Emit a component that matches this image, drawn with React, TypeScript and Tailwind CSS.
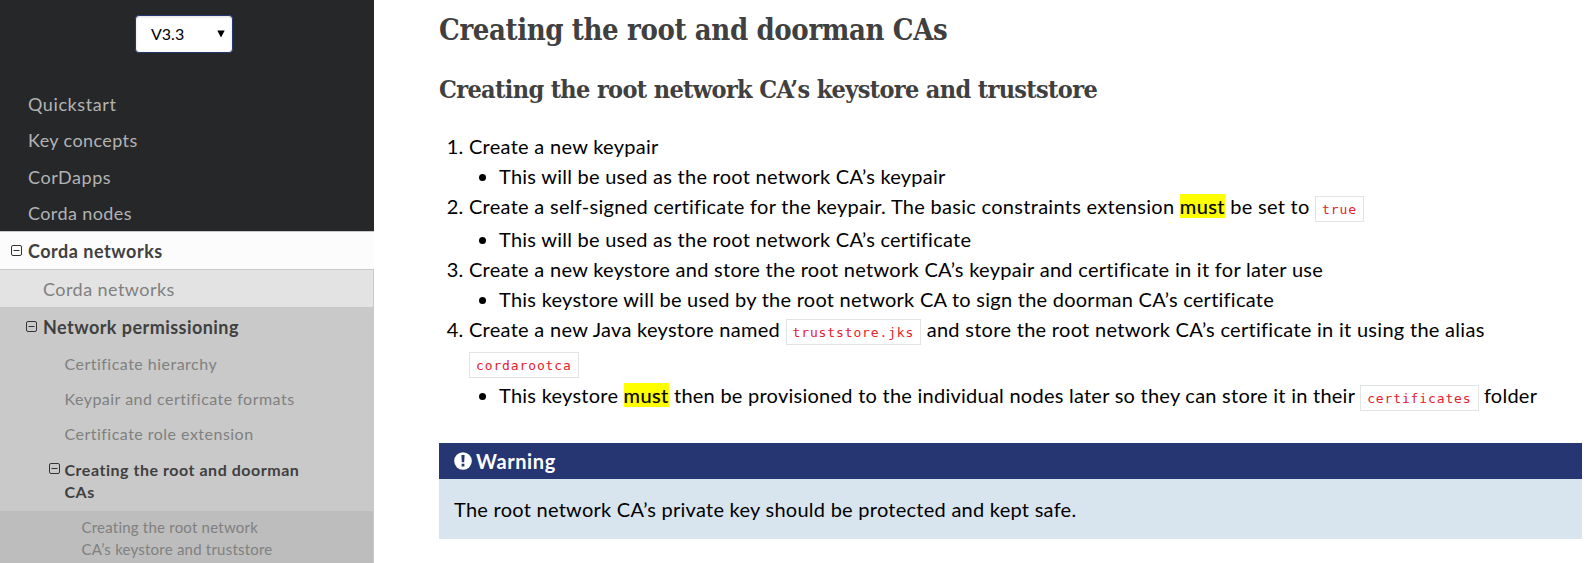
import type { ReactNode } from "react";

const Code = ({ children }: { children: ReactNode }) => (
  <code className="inline-block h-[26px] border border-[#e1e4e5] bg-white px-[6px] align-[0px] font-['DejaVu_Sans_Mono',monospace] text-[13px] leading-[25px] tracking-[0.87px] text-[#e7202c]">
    {children}
  </code>
);

const Must = () => <span className="bg-[#ffff00] tracking-[0.4px] [-webkit-text-stroke:0.2px_black]">must</span>;

const Minus = ({ className }: { className: string }) => (
  <svg className={className} width="11" height="11" viewBox="0 0 11 11" fill="none" stroke="#333">
    <rect x="0.5" y="0.5" width="10" height="10" rx="1.5" />
    <path d="M2.5 5.5h6" />
  </svg>
);

const Sub = ({ children }: { children: ReactNode }) => (
  <ul className="ml-[30px] list-disc leading-[30px] tracking-[0.25px]">
    <li>{children}</li>
  </ul>
);

export default function App() {
  return (
    <div className="flex h-[563px] w-[1593px] overflow-hidden bg-white font-['Lato',sans-serif] text-black">
      <nav className="flex w-[374px] shrink-0 flex-col bg-[#252729] text-[18px]">
        <div className="flex h-[86px] justify-center pt-[15px] pr-[6px]">
          <button className="flex h-[38px] w-[98px] items-center justify-between rounded-[4px] border border-[#263673] bg-white pl-[15px] pr-[7px] text-[16px] text-black shadow-[inset_0_1px_3px_#ddd]">
            <span>V3.3</span>
            <svg width="8" height="8" viewBox="0 0 8 8"><path d="M0.3 0.5h7.4L4 7.5z" /></svg>
          </button>
        </div>
        <div className="flex h-[145px] flex-col pl-7 leading-[36.4px] tracking-[0.4px] text-[#b3b3b3]">
          <a className="tracking-[0.6px]">Quickstart</a>
          <a>Key concepts</a>
          <a className="tracking-[0.55px]">CorDapps</a>
          <a>Corda nodes</a>
        </div>
        <div className="flex h-[39px] items-center border-y border-[#c9c9c9] bg-[#fcfcfc] pl-[11px] font-bold tracking-[0.52px] text-[#404040]">
          <Minus className="mr-[6px]" />
          <span className="pt-[2px]">Corda networks</span>
        </div>
        <div className="flex h-[37px] items-center border-r border-[#c9c9c9] bg-[#e3e3e3] pl-[43px] pt-[2px] tracking-[0.45px] text-[#808080]">
          Corda networks
        </div>
        <div className="h-[204px] bg-[#c9c9c9] text-[16px] text-[#808080]">
          <div className="flex h-[39px] items-center pl-[26px] text-[18px] font-bold tracking-[0.45px] text-[#404040]">
            <Minus className="mr-[6px]" />
            <span className="pt-[2px]">Network permissioning</span>
          </div>
          <div className="flex flex-col pl-[64.5px] leading-[35px] tracking-[0.48px]">
            <a>Certificate hierarchy</a>
            <a>Keypair and certificate formats</a>
            <a>Certificate role extension</a>
          </div>
          <div className="flex pl-[49px] pt-[8px] font-bold leading-[22px] tracking-[0.53px] text-[#404040]">
            <Minus className="mr-[4.5px] mt-[4px]" />
            <span>Creating the root and doorman<br />CAs</span>
          </div>
        </div>
        <div className="mr-px flex-1 bg-[#bdbdbd] pl-[81.5px] pt-[5px] text-[15px] leading-[22px] tracking-[0.22px] text-[#808080] shadow-[1px_0_#c9c9c9]">
          Creating the root network<br />CA’s keystore and truststore
        </div>
      </nav>
      <main className="ml-[65px] w-[1143px] shrink-0">
        <h1 className="h-[60px] whitespace-nowrap pt-[10px] font-['Roboto_Slab','DejaVu_Serif_Condensed',serif] text-[29px] font-bold leading-[40px] tracking-[-0.38px] text-[#404040]">
          Creating the root and doorman CAs
        </h1>
        <h2 className="h-[71px] whitespace-nowrap pt-[10px] font-['Roboto_Slab','DejaVu_Serif_Condensed',serif] text-[25px] font-bold leading-[40px] tracking-[-0.65px] text-[#404040]">
          Creating the root network CA’s keystore and truststore
        </h2>
        <ol className="ml-[30px] list-decimal whitespace-nowrap text-[20px] leading-[30px] tracking-[0.29px]">
          <li className="h-[60px]">Create a new keypair<Sub>This will be used as the root network CA’s keypair</Sub></li>
          <li className="h-[63px]">
            <div className="h-[33px]">Create a self-signed certificate for the keypair. The basic constraints extension <Must /> be set to <Code>true</Code></div>
            <Sub>This will be used as the root network CA’s certificate</Sub>
          </li>
          <li className="h-[60px]">
            Create a new keystore and store the root network CA’s keypair and certificate in it for later use
            <Sub>This keystore will be used by the root network CA to sign the doorman CA’s certificate</Sub>
          </li>
          <li className="h-[129px]">
            <div className="h-[33px]">Create a new Java keystore named <Code>truststore.jks</Code> and store the root network CA’s certificate in it using the alias</div>
            <div className="h-[33px]"><Code>cordarootca</Code></div>
            <Sub>This keystore <Must /> then be provisioned to the individual nodes later so they can store it in their <Code>certificates</Code> folder</Sub>
          </li>
        </ol>
        <section className="h-[96px] bg-[#d9e5ee] text-[20px]">
          <h3 className="flex h-9 items-center bg-[#263673] pb-px pl-[15px] font-bold tracking-[0.6px] text-white">
            <svg className="mr-[4px]" width="18" height="18" viewBox="0 0 18 18">
              <circle cx="9" cy="9" r="8.8" fill="white" />
              <path d="M7.4 3h3.2l-.4 7.2H7.8zM7.6 11.8h2.8v2.7H7.6z" fill="#263673" />
            </svg>
            Warning
          </h3>
          <p className="pl-[15px] pt-[15px] leading-[30px] tracking-[0.26px]">The root network CA’s private key should be protected and kept safe.</p>
        </section>
      </main>
    </div>
  );
}
